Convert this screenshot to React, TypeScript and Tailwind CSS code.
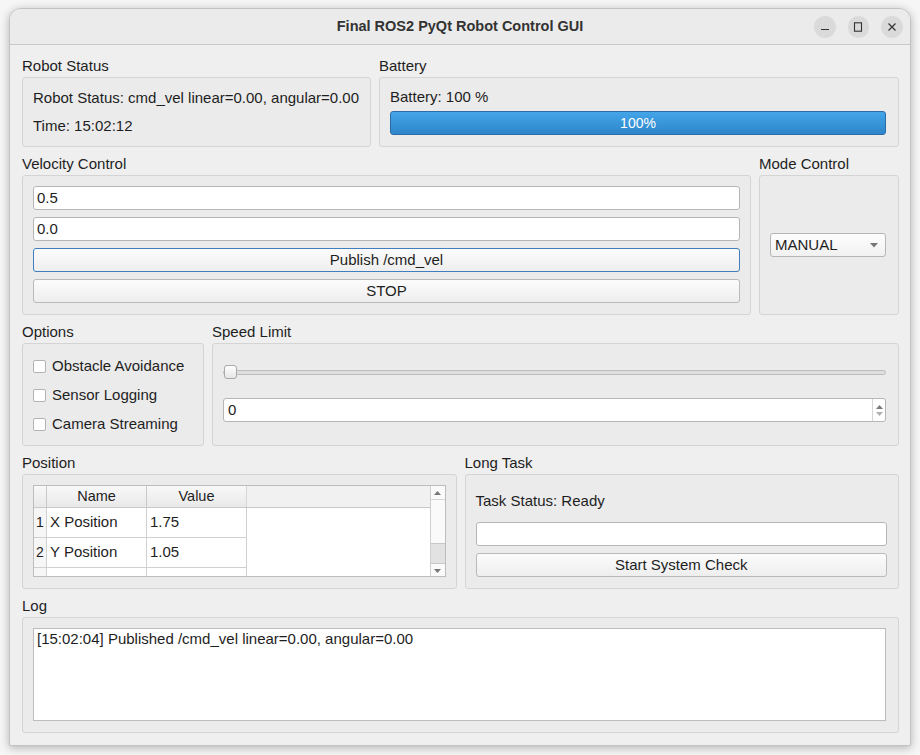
import React from "react";

function Group({
  title,
  className,
  boxClassName,
  children,
}: {
  title: string;
  className: string;
  boxClassName: string;
  children?: React.ReactNode;
}) {
  return (
    <div className={`flex flex-col ${className}`}>
      <div className="h-[20px] leading-[18px] whitespace-nowrap">{title}</div>
      <div
        className={`flex-1 border border-[#d4d4d4] bg-[#ebebeb] rounded-[3px] ${boxClassName}`}
      >
        {children}
      </div>
    </div>
  );
}

function LineEdit({ value }: { value: string }) {
  return (
    <div className="h-[24px] shrink-0 border border-[#b6b6b6] bg-white rounded-[3px] pl-[3px] leading-[22px] whitespace-nowrap">
      {value}
    </div>
  );
}

function Button({ label, focused }: { label: string; focused?: boolean }) {
  return (
    <div
      className={`h-[24px] shrink-0 rounded-[3px] border bg-gradient-to-b from-[#fcfcfc] to-[#eeeeee] flex items-center justify-center whitespace-nowrap ${
        focused ? "border-[#3f7fbf]" : "border-[#bababa]"
      }`}
    >
      {label}
    </div>
  );
}

function CheckRow({ label }: { label: string }) {
  return (
    <div className="h-[20px] flex items-center gap-[6px] whitespace-nowrap">
      <div className="w-[13px] h-[13px] border border-[#b3b3b3] bg-white rounded-[2px] shrink-0" />
      <span>{label}</span>
    </div>
  );
}

export default function App() {
  return (
    <div className="w-[920px] h-[755px] bg-[#f6f6f6] pt-[8px] pl-[9px] font-['Liberation_Sans',Arial,sans-serif] text-[15px] text-[#1e1e1e]">
      <div className="w-[902px] h-[738px] rounded-t-[12px] border border-[#c2c2c2] bg-[#efefef] shadow-[0_2px_10px_rgba(0,0,0,0.28)] overflow-hidden flex flex-col">
        {/* Title bar */}
        <div className="h-[36px] shrink-0 bg-[#ebebeb] border-b border-[#c9c9c9] flex items-center">
          <div className="w-[96px] shrink-0" />
          <div className="flex-1 text-center font-bold text-[14.5px] text-[#333333] whitespace-nowrap">
            Final ROS2 PyQt Robot Control GUI
          </div>
          <div className="w-[96px] shrink-0 flex items-center justify-end gap-[12px] pr-[7px]">
            <div className="w-[22px] h-[22px] rounded-full bg-[#dadada] flex items-center justify-center">
              <svg width="10" height="10" viewBox="0 0 10 10">
                <line x1="1" y1="7.5" x2="9" y2="7.5" stroke="#333" strokeWidth="1.2" />
              </svg>
            </div>
            <div className="w-[22px] h-[22px] rounded-full bg-[#dadada] flex items-center justify-center">
              <svg width="10" height="10" viewBox="0 0 10 10">
                <rect x="1.5" y="0.8" width="7" height="8.4" fill="none" stroke="#333" strokeWidth="1.1" />
              </svg>
            </div>
            <div className="w-[22px] h-[22px] rounded-full bg-[#dadada] flex items-center justify-center">
              <svg width="10" height="10" viewBox="0 0 10 10">
                <path d="M1.5 1.5 L8.5 8.5 M8.5 1.5 L1.5 8.5" stroke="#333" strokeWidth="1.2" />
              </svg>
            </div>
          </div>
        </div>

        {/* Content */}
        <div className="flex-1 flex flex-col gap-[8px] pt-[12px] pl-[12px] pr-[11px] pb-[12px]">
          {/* Row 1 */}
          <div className="h-[90px] flex gap-[8px]">
            <Group
              title="Robot Status"
              className="w-[349px]"
              boxClassName="pl-[10px] pt-[10px] flex flex-col gap-[8px]"
            >
              <div className="h-[20px] leading-[20px] whitespace-nowrap">
                Robot Status: cmd_vel linear=0.00, angular=0.00
              </div>
              <div className="h-[20px] leading-[20px] whitespace-nowrap">Time: 15:02:12</div>
            </Group>
            <Group
              title="Battery"
              className="flex-1"
              boxClassName="pl-[10px] pr-[12px] pt-[9px] flex flex-col"
            >
              <div className="h-[20px] leading-[20px] whitespace-nowrap">Battery: 100 %</div>
              <div className="mt-[4px] h-[24px] rounded-[3px] border border-[#2c6ca6] bg-gradient-to-b from-[#43a5e8] to-[#2f86ca] flex items-center justify-center text-white text-[14px]">
                100%
              </div>
            </Group>
          </div>

          {/* Row 2 */}
          <div className="h-[160px] flex gap-[8px]">
            <Group
              title="Velocity Control"
              className="w-[729px]"
              boxClassName="px-[10px] pt-[10px] flex flex-col gap-[7px]"
            >
              <LineEdit value="0.5" />
              <LineEdit value="0.0" />
              <Button label="Publish /cmd_vel" focused />
              <Button label="STOP" />
            </Group>
            <Group
              title="Mode Control"
              className="flex-1"
              boxClassName="pl-[10px] pr-[12px] flex items-center"
            >
              <div className="w-full h-[24px] rounded-[3px] border border-[#b6b6b6] bg-gradient-to-b from-[#fdfdfd] to-[#f1f1f1] flex items-center pl-[4px] pr-[7px]">
                <span className="flex-1 whitespace-nowrap">MANUAL</span>
                <svg width="8" height="5" viewBox="0 0 8 5">
                  <path d="M0 0 L8 0 L4 4.5 Z" fill="#777" />
                </svg>
              </div>
            </Group>
          </div>

          {/* Row 3 */}
          <div className="h-[123px] flex gap-[8px]">
            <Group
              title="Options"
              className="w-[182px]"
              boxClassName="pl-[10px] pt-[12px] flex flex-col gap-[9px]"
            >
              <CheckRow label="Obstacle Avoidance" />
              <CheckRow label="Sensor Logging" />
              <CheckRow label="Camera Streaming" />
            </Group>
            <Group
              title="Speed Limit"
              className="flex-1"
              boxClassName="pl-[10px] pr-[12px] pt-[21px] flex flex-col"
            >
              <div className="relative h-[14px] flex items-center">
                <div className="w-full h-[5px] rounded-[3px] border border-[#bdbdbd] bg-[#dedede]" />
                <div className="absolute left-[1px] top-0 w-[13px] h-[14px] rounded-[3px] border border-[#a9a9a9] bg-gradient-to-b from-[#ffffff] to-[#e6e6e6]" />
              </div>
              <div className="mt-[19px] h-[24px] border border-[#b6b6b6] bg-white rounded-[3px] flex">
                <div className="flex-1 pl-[4px] leading-[22px]">0</div>
                <div className="w-[13px] border-l border-[#d6d6d6] flex flex-col items-center justify-center gap-[3px]">
                  <svg width="7" height="4" viewBox="0 0 7 4">
                    <path d="M0 4 L7 4 L3.5 0 Z" fill="#7a7a7a" />
                  </svg>
                  <svg width="7" height="4" viewBox="0 0 7 4">
                    <path d="M0 0 L7 0 L3.5 4 Z" fill="#b0b0b0" />
                  </svg>
                </div>
              </div>
            </Group>
          </div>

          {/* Row 4 */}
          <div className="h-[135px] flex gap-[8px]">
            <Group
              title="Position"
              className="flex-1"
              boxClassName="px-[10px] pt-[10px]"
            >
              <div className="h-[92px] border border-[#bdbdbd] bg-white flex overflow-hidden">
                <div className="flex-1 flex flex-col overflow-hidden">
                  {/* header */}
                  <div className="h-[22px] shrink-0 flex border-b border-[#c9c9c9] bg-[#f2f2f2]">
                    <div className="w-[13px] border-r border-[#c9c9c9] bg-gradient-to-b from-[#f8f8f8] to-[#e9e9e9]" />
                    <div className="w-[100px] border-r border-[#c9c9c9] bg-gradient-to-b from-[#f8f8f8] to-[#e9e9e9] flex items-center justify-center text-[14.5px]">
                      Name
                    </div>
                    <div className="w-[100px] border-r border-[#d6d6d6] bg-gradient-to-b from-[#f8f8f8] to-[#e9e9e9] flex items-center justify-center text-[14.5px]">
                      Value
                    </div>
                    <div className="flex-1 bg-[#f1f1f1]" />
                  </div>
                  {[
                    ["1", "X Position", "1.75"],
                    ["2", "Y Position", "1.05"],
                    ["", "", ""],
                  ].map((r, i) => (
                    <div key={i} className="h-[30px] shrink-0 flex">
                      <div className="w-[13px] border-r border-b border-[#d0d0d0] bg-[#f6f6f6] flex items-center justify-center text-[14px]">
                        {r[0]}
                      </div>
                      <div className="w-[100px] border-r border-b border-[#d0d0d0] pl-[3px] flex items-center whitespace-nowrap">
                        {r[1]}
                      </div>
                      <div className="w-[100px] border-r border-b border-[#d0d0d0] pl-[3px] flex items-center whitespace-nowrap">
                        {r[2]}
                      </div>
                      <div className="flex-1" />
                    </div>
                  ))}
                </div>
                <div className="w-[15px] shrink-0 border-l border-[#cfcfcf] bg-[#fafafa] flex flex-col">
                  <div className="h-[14px] shrink-0 border-b border-[#d6d6d6] flex items-center justify-center">
                    <svg width="7" height="4" viewBox="0 0 7 4">
                      <path d="M0 4 L7 4 L3.5 0 Z" fill="#777" />
                    </svg>
                  </div>
                  <div className="h-[43px] shrink-0" />
                  <div className="h-[21px] shrink-0 bg-[#e2e2e2] border-y border-[#c8c8c8]" />
                  <div className="flex-1" />
                  <div className="h-[10px] shrink-0 flex items-center justify-center">
                    <svg width="7" height="4" viewBox="0 0 7 4">
                      <path d="M0 0 L7 0 L3.5 4 Z" fill="#777" />
                    </svg>
                  </div>
                </div>
              </div>
            </Group>
            <Group
              title="Long Task"
              className="flex-1"
              boxClassName="pl-[10px] pr-[11px] pt-[16px] flex flex-col"
            >
              <div className="h-[20px] leading-[20px] whitespace-nowrap">Task Status: Ready</div>
              <div className="mt-[11px]">
                <LineEdit value="" />
              </div>
              <div className="mt-[7px]">
                <Button label="Start System Check" />
              </div>
            </Group>
          </div>

          {/* Row 5 */}
          <div className="h-[136px] flex">
            <Group title="Log" className="flex-1" boxClassName="pl-[10px] pr-[12px] pt-[10px]">
              <div className="h-[93px] border border-[#bdbdbd] bg-white pl-[3px] leading-[20px] whitespace-nowrap">
                [15:02:04] Published /cmd_vel linear=0.00, angular=0.00
              </div>
            </Group>
          </div>
        </div>
      </div>
    </div>
  );
}
